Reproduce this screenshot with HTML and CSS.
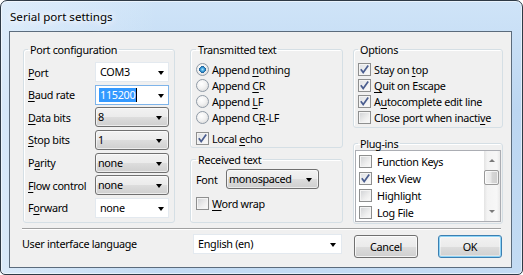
FILE: index.html
```html
<!DOCTYPE html>
<html>
<head>
<meta charset="utf-8">
<link rel="stylesheet" href="styles.css">
</head>
<body>
<div class="window">
  <div class="titlebar">Serial port settings</div>
  <div class="client">
    <div class="groups">
      <fieldset class="group g-port">
        <legend>Port configuration</legend>
        <div class="form">
          <div class="frow"><span class="lbl"><u>P</u>ort</span><div class="combo edit"><span class="val">COM3</span><i class="arrow"></i></div></div>
          <div class="frow"><span class="lbl"><u>B</u>aud rate</span><div class="combo edit focus"><span class="val"><span class="sel">115200</span><span class="caret"></span></span><i class="arrow"></i></div></div>
          <div class="frow"><span class="lbl"><u>D</u>ata bits</span><div class="combo btn"><span class="val">8</span><i class="arrow"></i></div></div>
          <div class="frow"><span class="lbl"><u>S</u>top bits</span><div class="combo btn"><span class="val">1</span><i class="arrow"></i></div></div>
          <div class="frow"><span class="lbl">P<u>a</u>rity</span><div class="combo btn"><span class="val">none</span><i class="arrow"></i></div></div>
          <div class="frow"><span class="lbl"><u>F</u>low control</span><div class="combo btn"><span class="val">none</span><i class="arrow"></i></div></div>
          <div class="frow"><span class="lbl">F<u>o</u>rward</span><div class="combo edit"><span class="val">none</span><i class="arrow"></i></div></div>
        </div>
      </fieldset>
      <div class="col">
        <fieldset class="group g-tx">
          <legend>Transmitted text</legend>
          <div class="opt"><span class="radio on"></span><span class="txt">Append <u>n</u>othing</span></div>
          <div class="opt"><span class="radio"></span><span class="txt">Append <u>C</u>R</span></div>
          <div class="opt"><span class="radio"></span><span class="txt">Append <u>L</u>F</span></div>
          <div class="opt"><span class="radio"></span><span class="txt">Append C<u>R</u>-LF</span></div>
          <div class="opt echo"><span class="check on"><svg viewBox="0 0 13 13" width="13" height="13"><path d="M2.8 6.2 L5.2 9.6 L10.2 2.6" fill="none" stroke="#4a5d8f" stroke-width="1.7"/></svg></span><span class="txt">Local <u>e</u>cho</span></div>
        </fieldset>
        <fieldset class="group g-rx">
          <legend>Received text</legend>
          <div class="fontrow"><span class="lbl2">Font</span><div class="combo btn wide"><span class="val">monospaced</span><i class="arrow"></i></div></div>
          <div class="opt wrap"><span class="check"></span><span class="txt"><u>W</u>ord wrap</span></div>
        </fieldset>
      </div>
      <div class="col">
        <fieldset class="group g-opt">
          <legend>Options</legend>
          <div class="opt"><span class="check on"><svg viewBox="0 0 13 13" width="13" height="13"><path d="M2.8 6.2 L5.2 9.6 L10.2 2.6" fill="none" stroke="#4a5d8f" stroke-width="1.7"/></svg></span><span class="txt">Stay on <u>t</u>op</span></div>
          <div class="opt"><span class="check on"><svg viewBox="0 0 13 13" width="13" height="13"><path d="M2.8 6.2 L5.2 9.6 L10.2 2.6" fill="none" stroke="#4a5d8f" stroke-width="1.7"/></svg></span><span class="txt"><u>Q</u>uit on Escape</span></div>
          <div class="opt"><span class="check on"><svg viewBox="0 0 13 13" width="13" height="13"><path d="M2.8 6.2 L5.2 9.6 L10.2 2.6" fill="none" stroke="#4a5d8f" stroke-width="1.7"/></svg></span><span class="txt">A<u>u</u>tocomplete edit line</span></div>
          <div class="opt"><span class="check"></span><span class="txt">Close port when inacti<u>v</u>e</span></div>
        </fieldset>
        <fieldset class="group g-plug">
          <legend>Plug-ins</legend>
          <div class="listbox">
            <div class="items">
              <div class="item"><span class="check"></span><span class="txt">Function Keys</span></div>
              <div class="item"><span class="check on"><svg viewBox="0 0 13 13" width="13" height="13"><path d="M2.8 6.2 L5.2 9.6 L10.2 2.6" fill="none" stroke="#4a5d8f" stroke-width="1.7"/></svg></span><span class="txt">Hex View</span></div>
              <div class="item"><span class="check"></span><span class="txt">Highlight</span></div>
              <div class="item"><span class="check"></span><span class="txt">Log File</span></div>
            </div>
            <div class="vscroll">
              <div class="sbtn"><i class="up"></i></div>
              <div class="track"><div class="thumb"></div></div>
              <div class="sbtn"><i class="down"></i></div>
            </div>
          </div>
        </fieldset>
      </div>
    </div>
    <div class="sep"></div>
    <div class="bottom">
      <span class="lang">User interface language</span>
      <div class="combo edit langcombo"><span class="val">English (en)</span><i class="arrow"></i></div>
      <button class="button cancel">Cancel</button>
      <button class="button ok">OK</button>
    </div>
  </div>
</div>
</body>
</html>
```

FILE: styles.css
```css
* { box-sizing: border-box; }
html, body { margin: 0; padding: 0; background: #ffffff; }
body {
  font-family: "Noto Sans", "Open Sans", sans-serif;
  font-size: 10.8px;
  letter-spacing: -0.3px;
  color: #000;
}
u { text-decoration: underline; text-underline-offset: 2px; }

.window {
  width: 523px;
  height: 275px;
  border: 1px solid #2e3a46;
  border-radius: 7px 7px 5px 5px;
  padding: 0 10px 6px 8px;
  background: linear-gradient(90deg, rgba(232,243,253,0.6) 0%, rgba(255,255,255,0) 30%, rgba(255,255,255,0) 100%),
              linear-gradient(180deg, #cfe4f8 0%, #bcd6f1 40%, #c3dbf3 100%);
  box-shadow: inset 0 0 0 1px rgba(255,255,255,0.55);
}
.titlebar {
  height: 30px;
  line-height: 31px;
  padding-left: 1px;
  font-size: 11.6px;
  letter-spacing: 0;
  color: #000;
  text-shadow: 0 0 6px #ffffff, 0 0 10px #ffffff, 0 0 14px rgba(255,255,255,0.9);
}
.client {
  height: 237px;
  border: 1px solid #5b6b7c;
  background: #f0f0f0;
  padding: 10px 0 0 13px;
}

.groups {
  display: flex;
  height: 181px;
}
.col {
  display: flex;
  flex-direction: column;
}
.g-port { width: 152px; }
.col:nth-child(2) { width: 153px; margin-left: 15px; }
.col:nth-child(3) { width: 150px; margin-left: 10px; }

.group {
  margin: 0;
  min-width: 0;
  border: 1px solid #d5dfe5;
  border-radius: 3px;
  box-shadow: inset 1px 1px 0 #ffffff;
  padding: 0 5px 2px 5px;
}
.group legend {
  padding: 0 2px;
  margin-left: 0;
  line-height: 15px;
}
.txt { white-space: nowrap; }

/* port configuration */
.g-port { padding: 0 5px 2px 4px; }
.form {
  display: flex;
  flex-direction: column;
  gap: 2.67px;
  padding-top: 5px;
}
.frow {
  display: flex;
  align-items: center;
  height: 20px;
}
.lbl { width: 67px; flex: none; white-space: nowrap; }

.combo {
  position: relative;
  width: 74px;
  height: 20px;
  line-height: 18px;
  flex: none;
}
.combo .val { display: block; white-space: nowrap; }
.combo .arrow {
  position: absolute;
  right: 4px;
  top: 8px;
  width: 0;
  height: 0;
  border-left: 3.5px solid transparent;
  border-right: 3.5px solid transparent;
  border-top: 4px solid #000;
}
.combo.edit {
  background: #ffffff;
  border: 1px solid #e3e9ef;
}
.combo.edit .val { padding-left: 4px; }
.combo.edit.focus { border-color: #7eb4ea; }
.combo.edit.focus .val { padding-left: 3px; }
.sel {
  background: #3399ff;
  color: #fff;
  padding: 0 1px;
  display: inline-block;
  line-height: 14px;
}
.caret {
  display: inline-block;
  width: 1px;
  height: 14px;
  background: #000;
  vertical-align: top;
  margin-top: 2px;
}
.combo.btn {
  border: 1px solid #707070;
  border-radius: 3px;
  background: linear-gradient(180deg, #f2f2f2 0%, #ebebeb 50%, #dddddd 51%, #cfcfcf 100%);
  box-shadow: inset 0 0 0 1px rgba(255,255,255,0.6);
}
.combo.btn .val { padding-left: 2px; }
.combo.btn .arrow { right: 6px; }

/* options / radios / checks */
.g-tx { padding: 0 5px 1px 5px; }
.g-tx .opt:first-of-type { margin-top: 4px; }
.opt {
  display: flex;
  align-items: center;
  height: 16px;
  white-space: nowrap;
}
.opt.echo { margin-top: 5px; }
.radio, .check {
  flex: none;
  width: 13px;
  height: 13px;
  margin-right: 3px;
}
.radio {
  border-radius: 50%;
  border: 1px solid #8f9aa6;
  background: radial-gradient(circle at 40% 35%, #ffffff 0%, #f2f2f2 45%, #d4d4d4 100%);
}
.radio.on {
  background:
    radial-gradient(circle at 50% 50%, #a5e2ff 0%, #3b9bd6 25%, #1e5f98 42%, rgba(0,0,0,0) 45%),
    radial-gradient(circle at 40% 35%, #ffffff 0%, #f0f0f0 45%, #d4d4d4 100%);
}
.check {
  border: 1px solid #8e8f8f;
  background: linear-gradient(135deg, #cfd1d4 0%, #eeeeee 60%, #fbfbfb 100%);
  box-shadow: inset 0 0 0 1px #f4f4f4;
  position: relative;
}
.check svg { position: absolute; left: -1px; top: -1px; }
.check.on { background: linear-gradient(135deg, #dcdfe3 0%, #f2f2f2 60%, #fbfbfb 100%); }

.g-rx {
  flex: 1;
  margin-top: 4px;
  padding: 0 5px 2px 5px;
}
.fontrow {
  display: flex;
  align-items: center;
  margin-top: 2px;
  height: 20px;
}
.lbl2 { width: 30px; flex: none; }
.combo.wide { width: 93px; }
.opt.wrap { margin-top: 6px; }

.g-opt { padding: 0 5px 2px 4px; }
.g-opt .opt:first-of-type { margin-top: 4px; }

.g-plug {
  flex: 1;
  margin-top: 8px;
  padding: 0 1px 1px 1px;
}
.g-plug legend { margin-left: 3px; }
.listbox {
  display: flex;
  height: 72px;
  margin-top: -1px;
  border: 1px solid #abadb3;
  background: #ffffff;
}
.items {
  flex: 1;
  padding: 2px 0 0 3px;
}
.item {
  display: flex;
  align-items: center;
  height: 17px;
  white-space: nowrap;
}
.item .check { margin-right: 5px; }
.vscroll {
  width: 16px;
  display: flex;
  flex-direction: column;
  background: linear-gradient(90deg, #e3e3e3 0%, #f3f3f3 20%, #f7f7f7 80%, #e9e9e9 100%);
}
.sbtn {
  height: 17px;
  position: relative;
}
.sbtn i {
  position: absolute;
  left: 5px;
  width: 0;
  height: 0;
  border-left: 3.5px solid transparent;
  border-right: 3.5px solid transparent;
}
.sbtn i.up { top: 8px; border-bottom: 3.5px solid #7a7a7a; }
.sbtn i.down { top: 6px; border-top: 3.5px solid #7a7a7a; }
.track { flex: 1; padding-top: 2px; }
.thumb {
  height: 15px;
  margin: 0 1px 0 0;
  border: 1px solid #9a9a9a;
  border-radius: 2px;
  background: linear-gradient(90deg, #f3f3f3 0%, #e8e8e8 45%, #d6d6d6 55%, #cfcfcf 100%);
  box-shadow: inset 0 0 0 1px rgba(255,255,255,0.7);
}

/* bottom */
.sep {
  margin: 5px 10px 0 -1px;
  height: 2px;
  border-top: 1px solid #a0a0a0;
  border-bottom: 1px solid #ffffff;
}
.bottom {
  display: flex;
  align-items: flex-start;
  margin-left: -1px;
  padding-top: 4px;
}
.lang {
  width: 171px;
  line-height: 20px;
  flex: none;
}
.combo.langcombo { width: 149px; }
.combo.langcombo .val { padding-left: 4px; }
.combo.langcombo .arrow { right: 5px; }
.button {
  font: inherit;
  letter-spacing: inherit;
  color: #000;
  width: 64px;
  height: 23px;
  margin-top: 1px;
  padding: 0;
  line-height: 20px;
  border: 1px solid #707070;
  border-radius: 3px;
  background: linear-gradient(180deg, #f2f2f2 0%, #ebebeb 50%, #dddddd 51%, #cfcfcf 100%);
  box-shadow: inset 0 0 0 1px rgba(255,255,255,0.75);
}
.cancel { margin-left: 12px; }
.ok {
  margin-left: 20px;
  border-color: #3c7fb1;
  box-shadow: inset 0 0 0 1px #8ed4f7, inset 0 0 0 2px rgba(255,255,255,0.4);
}
```
